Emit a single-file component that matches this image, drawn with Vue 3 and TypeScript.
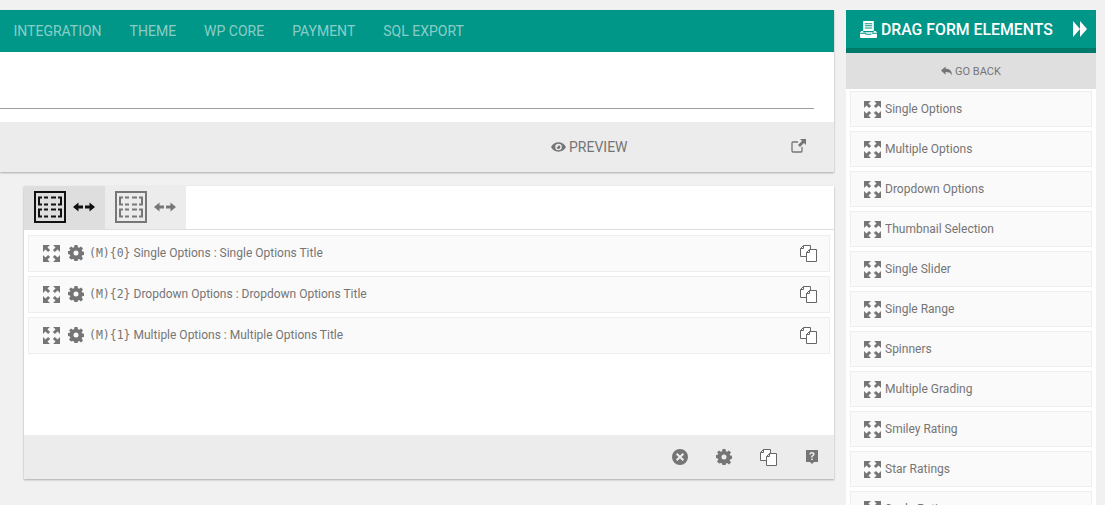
<script setup lang="ts">
const navItems = ['INTEGRATION', 'THEME', 'WP CORE', 'PAYMENT', 'SQL EXPORT']

const rows = [
  { code: '(M){0}', label: 'Single Options : Single Options Title' },
  { code: '(M){2}', label: 'Dropdown Options : Dropdown Options Title' },
  { code: '(M){1}', label: 'Multiple Options : Multiple Options Title' }
]

const elements = [
  'Single Options',
  'Multiple Options',
  'Dropdown Options',
  'Thumbnail Selection',
  'Single Slider',
  'Single Range',
  'Spinners',
  'Multiple Grading',
  'Smiley Rating',
  'Star Ratings',
  'Scale Rating'
]
</script>

<template>
  <div class="page">
    <svg class="defs" aria-hidden="true">
      <symbol id="i-expand" viewBox="0 0 16 16">
        <path d="M0 0h6.500L4.200 2.300 6.700 4.800 4.800 6.700 2.300 4.200 0 6.500zM16 0v6.500l-2.300-2.300-2.500 2.500-1.900-1.900 2.500-2.500L9.500 0zM0 16V9.500l2.300 2.300 2.500-2.500 1.900 1.900-2.500 2.500L6.500 16zM16 16H9.500l2.300-2.300-2.500-2.500 1.900-1.900 2.500 2.500L16 9.500z" />
      </symbol>
      <symbol id="i-gear" viewBox="0 0 16 16">
        <path fill-rule="evenodd" d="M6.500 0h3l.4 2.200 1.200.5L13 1.400l2 2-1.300 1.900.5 1.200 2.200.4v3l-2.200.4-.5 1.200 1.300 1.900-2 2-1.900-1.300-1.200.5-.4 2.200h-3l-.4-2.200-1.200-.5L3 14.600l-2-2 1.300-1.900-.5-1.200L0 9.100v-3l1.800-.4.500-1.200L1 3.400l2-2 1.900 1.300 1.200-.5zM8 5.500a2.500 2.500 0 1 0 0 5 2.500 2.500 0 0 0 0-5z" />
      </symbol>
      <symbol id="i-copy" viewBox="0 0 17 17">
        <path d="M3.500.5h7v11H.5v-8z" fill="#fff" stroke="currentColor" />
        <path d="M.5 3.500h3v-3" fill="none" stroke="currentColor" />
        <path d="M9.500 4.500h7v12h-10v-9z" fill="#fff" stroke="currentColor" />
        <path d="M6.500 7.500h3v-3" fill="none" stroke="currentColor" />
      </symbol>
      <symbol id="i-layout" viewBox="0 0 32 32">
        <path d="M1 1h30v30H1z" fill="none" stroke="currentColor" stroke-width="2" />
        <path d="M8 6.500H5v7h3M24 6.500h3v7h-3M10 6.500h4M17 6.500h5M10 13.500h4M17 13.500h5M8 18.500H5v7h3M24 18.500h3v7h-3M10 18.500h4M17 18.500h5M10 25.500h4M17 25.500h5" fill="none" stroke="currentColor" stroke-width="2" />
      </symbol>
      <symbol id="i-lr" viewBox="0 0 22 10">
        <path d="M0 5l5.500-4.500v3H10v3H5.500v3zM22 5l-5.500-4.500v3H12v3h4.500v3z" />
      </symbol>
    </svg>

    <main class="main">
      <section class="card">
        <nav class="nav">
          <a v-for="item in navItems" :key="item" class="nav-item">{{ item }}</a>
        </nav>
        <div class="blank">
          <div class="rule"></div>
        </div>
        <div class="toolbar">
          <span class="preview">
            <svg class="eye" viewBox="0 0 16 10">
              <path fill-rule="evenodd" d="M8 0c3.500 0 6.300 2 8 5-1.700 3-4.500 5-8 5S1.700 8 0 5c1.700-3 4.500-5 8-5zm0 1.500a3.500 3.500 0 1 0 0 7 3.500 3.500 0 0 0 0-7zM8 3a2 2 0 1 1-2 2c.8.300 2-.8 2-2z" />
            </svg>
            PREVIEW
          </span>
          <svg class="external" viewBox="0 0 15 14">
            <path d="M11 8v4a1 1 0 0 1-1 1H2a1 1 0 0 1-1-1V4a1 1 0 0 1 1-1h5" fill="none" stroke="currentColor" stroke-width="1.300" />
            <path d="M9 0h6v6l-2-2-4 4-2-2 4-4z" fill="currentColor" />
          </svg>
        </div>
      </section>

      <section class="card builder">
        <div class="tabs">
          <div class="tab active">
            <svg class="tab-layout"><use href="#i-layout" /></svg>
            <svg class="tab-lr"><use href="#i-lr" /></svg>
          </div>
          <div class="tab">
            <svg class="tab-layout"><use href="#i-layout" /></svg>
            <svg class="tab-lr"><use href="#i-lr" /></svg>
          </div>
        </div>
        <div class="rows">
          <div v-for="row in rows" :key="row.code" class="row">
            <svg class="expand"><use href="#i-expand" /></svg>
            <svg class="i16 gear"><use href="#i-gear" /></svg>
            <span class="row-text"><span class="mono">{{ row.code }}</span> {{ row.label }}</span>
            <svg class="copy"><use href="#i-copy" /></svg>
          </div>
        </div>
        <div class="builder-foot">
          <svg class="i16" viewBox="0 0 16 16">
            <path fill-rule="evenodd" d="M8 0a8 8 0 1 1 0 16A8 8 0 0 1 8 0zM5.400 3.900 3.900 5.400 6.500 8l-2.600 2.600 1.500 1.500L8 9.500l2.600 2.600 1.500-1.500L9.500 8l2.600-2.600-1.500-1.500L8 6.500z" />
          </svg>
          <svg class="i16"><use href="#i-gear" /></svg>
          <svg class="copy"><use href="#i-copy" /></svg>
          <svg class="i16" viewBox="0 0 16 16">
            <path fill-rule="evenodd" d="M2 1h12v12h-4l-2 2-2-2H2zM8 3C6.500 3 5.500 3.800 5.300 5.200l1.500.3C7 4.800 7.300 4.400 8 4.400s1 .3 1 .8c0 .4-.2.600-.8 1-.7.500-1 1-1 2v.3h1.500v-.3c0-.5.200-.7.700-1.100.7-.5 1.200-1 1.200-2C10.600 3.800 9.500 3 8 3zM7.200 9.500V11h1.600V9.500z" />
          </svg>
        </div>
      </section>
    </main>

    <aside class="side">
      <header class="side-head">
        <svg class="head-icon" viewBox="0 0 16 16">
          <path fill-rule="evenodd" d="M3 0h10v9.500H3zm1.500 2v1h7V2zm0 2v1h7V4zm0 2v1h7V6zM0 10.500l1.500-1H3v1h10v-1h1.500l1.500 1v.5h-4.500l-.5 1H6l-.5-1H0zM0 12h5l.5 1h5l.5-1h5v3a1 1 0 0 1-1 1H1a1 1 0 0 1-1-1z" />
        </svg>
        <span class="head-title">DRAG FORM ELEMENTS</span>
        <svg class="head-next" viewBox="0 0 14 16">
          <path d="M0 0l7 8-7 8zM7 0l7 8-7 8z" />
        </svg>
      </header>
      <div class="go-back">
        <svg class="back-icon" viewBox="0 0 12 10">
          <path d="M5 0v2.500c4 0 7 1.500 7 7.500-1-3-3-4-7-4v3L0 4.500z" />
        </svg>
        GO BACK
      </div>
      <ul class="elements">
        <li v-for="el in elements" :key="el" class="element">
          <svg class="expand"><use href="#i-expand" /></svg>
          <span>{{ el }}</span>
        </li>
      </ul>
    </aside>
  </div>
</template>

<style>
html,
body {
  margin: 0;
  height: 505px;
  overflow: hidden;
  background: #f1f1f1;
}
</style>

<style scoped>
.page {
  display: flex;
  gap: 12px;
  align-items: flex-start;
  width: 1105px;
  height: 505px;
  overflow: hidden;
  padding-top: 10px;
  box-sizing: border-box;
  font-family: Roboto, "Liberation Sans", sans-serif;
  color: #757575;
}

.defs {
  position: absolute;
  width: 0;
  height: 0;
}

svg {
  fill: currentColor;
  flex: none;
}

.main {
  width: 834px;
  flex: none;
}

.card {
  background: #fff;
  box-shadow: 0 1px 2px rgba(0, 0, 0, 0.3);
}

.nav {
  display: flex;
  gap: 28px;
  align-items: center;
  height: 42px;
  padding-left: 13.5px;
  background: #009688;
}

.nav-item {
  font-size: 14px;
  color: rgba(255, 255, 255, 0.55);
}

.blank {
  height: 70px;
  padding: 56px 20px 0 0;
  box-sizing: border-box;
}

.rule {
  height: 1px;
  background: #9e9e9e;
}

.toolbar {
  display: flex;
  align-items: center;
  height: 50px;
  padding: 0 28px 0 551px;
  box-sizing: border-box;
  background: #ececec;
}

.preview {
  display: flex;
  align-items: center;
  gap: 3px;
  font-size: 14px;
}

.eye {
  width: 15px;
  height: 10px;
}

.external {
  width: 15px;
  height: 14px;
  margin-left: auto;
  margin-bottom: 3px;
}

.builder {
  margin: 14px 0 0 24px;
}

.tabs {
  display: flex;
  height: 43px;
  border-bottom: 1px solid #ddd;
}

.tab {
  display: flex;
  align-items: center;
  gap: 7px;
  width: 81px;
  padding-left: 10px;
  box-sizing: border-box;
  background: #ececec;
  color: #777;
}

.tab.active {
  background: #dedede;
  color: #111;
}

.tab-layout {
  width: 32px;
  height: 32px;
  margin-bottom: 1px;
}

.tab-lr {
  width: 22px;
  height: 10px;
  margin-bottom: 2px;
}

.rows {
  display: flex;
  flex-direction: column;
  gap: 4px;
  height: 205px;
  padding: 5px 4px 0;
  box-sizing: border-box;
}

.row {
  display: flex;
  align-items: center;
  height: 37px;
  padding: 0 12px 1px 14px;
  box-sizing: border-box;
  background: #fafafa;
  border: 1px solid #eee;
  font-size: 12px;
}

.i16 {
  width: 16px;
  height: 16px;
}

.expand {
  width: 17px;
  height: 17px;
}

.gear {
  margin-left: 8px;
}

.row-text {
  margin-left: 5px;
}

.mono {
  font-family: "DejaVu Sans Mono", "Liberation Mono", monospace;
  font-size: 11.5px;
}

.copy {
  width: 17px;
  height: 17px;
  margin-left: auto;
  color: #666;
}

.builder-foot {
  display: flex;
  align-items: center;
  justify-content: flex-end;
  gap: 28px;
  height: 44px;
  padding-right: 14px;
  background: #ececec;
}

.builder-foot .copy {
  margin-left: 0;
  margin-right: -1px;
}

.side {
  width: 250px;
  flex: none;
  background: #fff;
}

.side-head {
  display: flex;
  align-items: center;
  height: 43px;
  padding: 0 9px 0 14px;
  box-sizing: border-box;
  background: #009688;
  border-bottom: 5px solid #00796b;
  color: #fff;
}

.head-icon {
  width: 17px;
  height: 17px;
}

.head-title {
  margin-left: 4px;
  font-size: 15.8px;
  font-weight: 500;
  white-space: nowrap;
}

.head-next {
  width: 14px;
  height: 16px;
  margin-left: auto;
}

.go-back {
  display: flex;
  align-items: center;
  justify-content: center;
  gap: 3px;
  height: 36px;
  background: #dfdfdf;
  font-size: 11px;
}

.back-icon {
  width: 11px;
  height: 10px;
}

.elements {
  list-style: none;
  margin: 0;
  padding: 2px 4px 0;
}

.element {
  display: flex;
  align-items: center;
  gap: 4px;
  height: 36px;
  margin-bottom: 4px;
  padding-left: 13px;
  box-sizing: border-box;
  background: #fafafa;
  border: 1px solid #eee;
  font-size: 12px;
}
</style>
